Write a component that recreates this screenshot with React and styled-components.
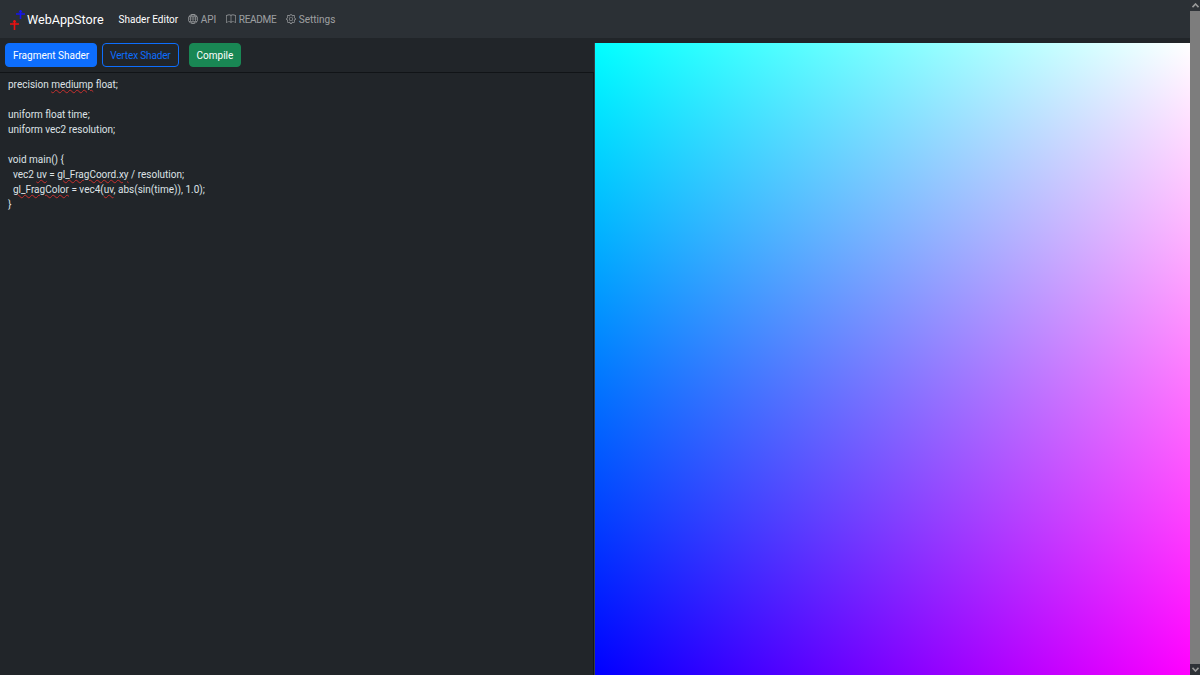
import React from "react";
import styled, { createGlobalStyle } from "styled-components";
import { BsGlobe, BsBook, BsGear } from "react-icons/bs";

const GlobalStyle = createGlobalStyle`
  html, body {
    margin: 0;
    height: 100%;
    overflow: hidden;
    background: #212529;
  }
  body {
    font-family: Roboto, "Open Sans", sans-serif;
    color: #dee2e6;
  }
`;

const Page = styled.div`
  display: flex;
  width: 1200px;
  height: 675px;
  overflow: hidden;
`;

const Main = styled.div`
  flex: 1;
  display: flex;
  flex-direction: column;
  min-width: 0;
`;

const Navbar = styled.nav`
  display: flex;
  align-items: center;
  height: 38px;
  padding-left: 10px;
  background: #2b3035;
  flex-shrink: 0;
`;

const Brand = styled.a`
  display: flex;
  align-items: center;
  font-size: 12.6px;
  color: #fff;
  margin-right: 15px;
`;

const Logo = styled.svg`
  width: 18px;
  height: 24px;
  margin-right: -1px;
`;

const NavLink = styled.a`
  display: flex;
  align-items: center;
  gap: 3px;
  font-size: 10px;
  margin-right: 9.5px;
  letter-spacing: ${(p) => (p.$tight ? "-0.3px" : "normal")};
  color: ${(p) => (p.$active ? "#fff" : "rgba(255, 255, 255, 0.55)")};
  svg {
    width: 10px;
    height: 10px;
  }
`;

const Workspace = styled.div`
  flex: 1;
  display: flex;
  min-height: 0;
  padding-top: 5px;
`;

const EditorPane = styled.section`
  width: 594px;
  display: flex;
  flex-direction: column;
  border-right: 1px solid #3a3f44;
`;

const Toolbar = styled.div`
  display: flex;
  align-items: flex-start;
  height: 29px;
  padding-left: 5px;
  border-bottom: 1px solid #111417;
  flex-shrink: 0;
`;

const Button = styled.button`
  height: 24px;
  padding: 0 7px;
  margin-right: ${(p) => p.$gap || 0}px;
  font-family: inherit;
  font-size: 10px;
  letter-spacing: ${(p) => (p.$tight ? "-0.15px" : "normal")};
  border-radius: 4px;
  border: 1px solid ${(p) => p.$border};
  background: ${(p) => p.$bg};
  color: ${(p) => p.$color || "#fff"};
`;

const Code = styled.div`
  flex: 1;
  padding: 4px 8px;
  font-size: 10px;
  color: #dee2e6;
  border-right: 1px solid #14171a;
`;

const CodeLine = styled.div`
  height: 15px;
  line-height: 15px;
  white-space: pre;
`;

const Typo = styled.span`
  text-decoration: underline wavy #c8302e;
  text-decoration-thickness: 1px;
  text-underline-offset: 1px;
`;

const Canvas = styled.div`
  flex: 1;
  background-image: linear-gradient(to top, #000, #0f0),
    linear-gradient(to right, #00f, #f0f);
  background-blend-mode: screen;
`;

const Scrollbar = styled.div`
  width: 10px;
  display: flex;
  flex-direction: column;
  background: #2e3237;
  flex-shrink: 0;
`;

const ScrollButton = styled.div`
  height: 11px;
  display: flex;
  align-items: center;
  justify-content: center;
  background: #2e3237;
  svg {
    width: 7px;
    height: 5px;
  }
`;

const ScrollThumb = styled.div`
  flex: 1;
  background: #7d7d7d;
`;

const Chevron = ({ up }) => (
  <svg viewBox="0 0 7 5">
    <path
      d={up ? "M0.5 4.2 3.5 1 6.5 4.2" : "M0.5 0.8 3.5 4 6.5 0.8"}
      fill="none"
      stroke="#9a9a9a"
      strokeWidth="1.6"
    />
  </svg>
);

function App() {
  return (
    <Page>
      <GlobalStyle />
      <Main>
        <Navbar>
          <Brand>
            <Logo viewBox="0 0 18 24">
              <path d="M0 17h9M4.5 13.5V23" stroke="#f01010" strokeWidth="1.6" fill="none" />
              <path d="M3 15.5 4.5 13 6 15.5" stroke="#f01010" strokeWidth="1" fill="none" />
              <path d="M6 7h9M10.5 3.5V12" stroke="#1414f0" strokeWidth="1.6" fill="none" />
              <path d="M9 5.5 10.5 3 12 5.5" stroke="#1414f0" strokeWidth="1" fill="none" />
            </Logo>
            WebAppStore
          </Brand>
          <NavLink $active>Shader Editor</NavLink>
          <NavLink><BsGlobe />API</NavLink>
          <NavLink $tight><BsBook />README</NavLink>
          <NavLink><BsGear />Settings</NavLink>
        </Navbar>
        <Workspace>
          <EditorPane>
            <Toolbar>
              <Button $bg="#0d6efd" $border="#0d6efd" $gap={5}>Fragment Shader</Button>
              <Button $bg="transparent" $border="#0d6efd" $color="#0d6efd" $gap={10} $tight>Vertex Shader</Button>
              <Button $bg="#198754" $border="#198754">Compile</Button>
            </Toolbar>
            <Code>
              <CodeLine>precision <Typo>mediump</Typo> float;</CodeLine>
              <CodeLine />
              <CodeLine>uniform float time;</CodeLine>
              <CodeLine>uniform vec2 resolution;</CodeLine>
              <CodeLine />
              <CodeLine>void main() {"{"}</CodeLine>
              <CodeLine>{"  vec2 "}<Typo>uv</Typo> = <Typo>gl_FragCoord.xy</Typo> / resolution;</CodeLine>
              <CodeLine>{"  "}<Typo>gl_FragColor</Typo> = vec4(<Typo>uv</Typo>, abs(sin(time)), 1.0);</CodeLine>
              <CodeLine>{"}"}</CodeLine>
            </Code>
          </EditorPane>
          <Canvas />
        </Workspace>
      </Main>
      <Scrollbar>
        <ScrollButton><Chevron up /></ScrollButton>
        <ScrollThumb />
        <ScrollButton><Chevron /></ScrollButton>
      </Scrollbar>
    </Page>
  );
}

export default App;
